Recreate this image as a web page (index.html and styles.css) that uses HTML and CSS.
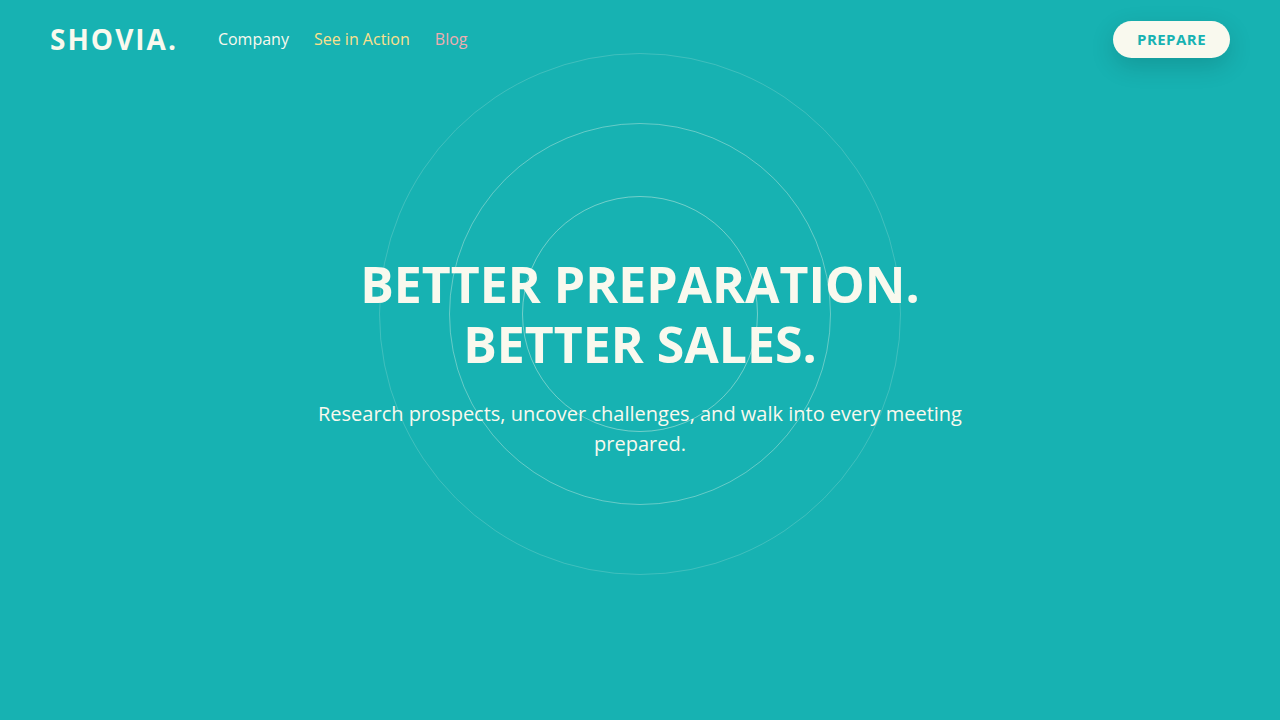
FILE: index.html
```html
<!DOCTYPE html>
<html lang="en">
<head>
<meta charset="utf-8">
<meta name="viewport" content="width=device-width, initial-scale=1">
<title>Shovia</title>
<link rel="stylesheet" href="styles.css">
</head>
<body>
<header class="header">
  <a class="logo" href="#">SHOVIA.</a>
  <nav class="nav">
    <a class="nav-link" href="#">Company</a>
    <a class="nav-link nav-link-yellow" href="#">See in Action</a>
    <a class="nav-link nav-link-pink" href="#">Blog</a>
  </nav>
  <button class="cta" type="button">PREPARE</button>
</header>
<main class="hero">
  <div class="rings" aria-hidden="true">
    <span class="ring ring-outer"></span>
    <span class="ring ring-middle"></span>
    <span class="ring ring-inner"></span>
  </div>
  <div class="hero-content">
    <h1 class="title">BETTER PREPARATION.<br>BETTER SALES.</h1>
    <p class="subtitle">Research prospects, uncover challenges, and walk into every meeting prepared.</p>
  </div>
</main>
</body>
</html>
```
FILE: styles.css
```css
* {
  box-sizing: border-box;
}

body {
  margin: 0;
  min-height: 100vh;
  display: flex;
  flex-direction: column;
  overflow-x: hidden;
  background: #17b2b2;
  color: #f9f9ee;
  font-family: "Open Sans", sans-serif;
}

.header {
  display: flex;
  align-items: center;
  padding: 20px 50px;
}

.logo {
  margin-right: 40px;
  color: inherit;
  font-size: 28px;
  font-weight: 700;
  letter-spacing: 2px;
  line-height: 38px;
  text-decoration: none;
}

.nav {
  display: flex;
  gap: 25px;
}

.nav-link {
  color: inherit;
  font-size: 16px;
  line-height: 24px;
  text-decoration: none;
}

.nav-link-yellow {
  color: #fce08c;
}

.nav-link-pink {
  color: #efacb0;
}

.cta {
  margin-left: auto;
  padding: 8px 24px;
  border: 0;
  border-radius: 20px;
  background: #f9f9ee;
  box-shadow: 0 8px 24px rgba(0, 0, 0, 0.15);
  color: #17b2b2;
  font: 700 15px/20px "Open Sans", sans-serif;
  padding-bottom: 9px;
  letter-spacing: 0.03em;
}

.hero {
  flex: 1;
  position: relative;
  display: flex;
  justify-content: center;
  padding: 176px 20px 40px;
}

.rings {
  position: absolute;
  top: 236px;
  left: 50%;
}

.ring {
  position: absolute;
  border: 1px solid;
  border-radius: 50%;
  transform: translate(-50%, -50%);
}

.ring-inner {
  width: 236px;
  height: 236px;
  border-color: rgba(249, 249, 238, 0.4);
}

.ring-middle {
  width: 382px;
  height: 382px;
  border-color: rgba(249, 249, 238, 0.35);
}

.ring-outer {
  width: 522px;
  height: 522px;
  border-color: rgba(249, 249, 238, 0.18);
}

.hero-content {
  position: relative;
  max-width: 700px;
  text-align: center;
}

.title {
  margin: 0 0 25px;
  font-size: 50px;
  font-weight: 700;
  line-height: 60px;
}

.subtitle {
  margin: 0;
  font-size: 20px;
  line-height: 30px;
}
```
